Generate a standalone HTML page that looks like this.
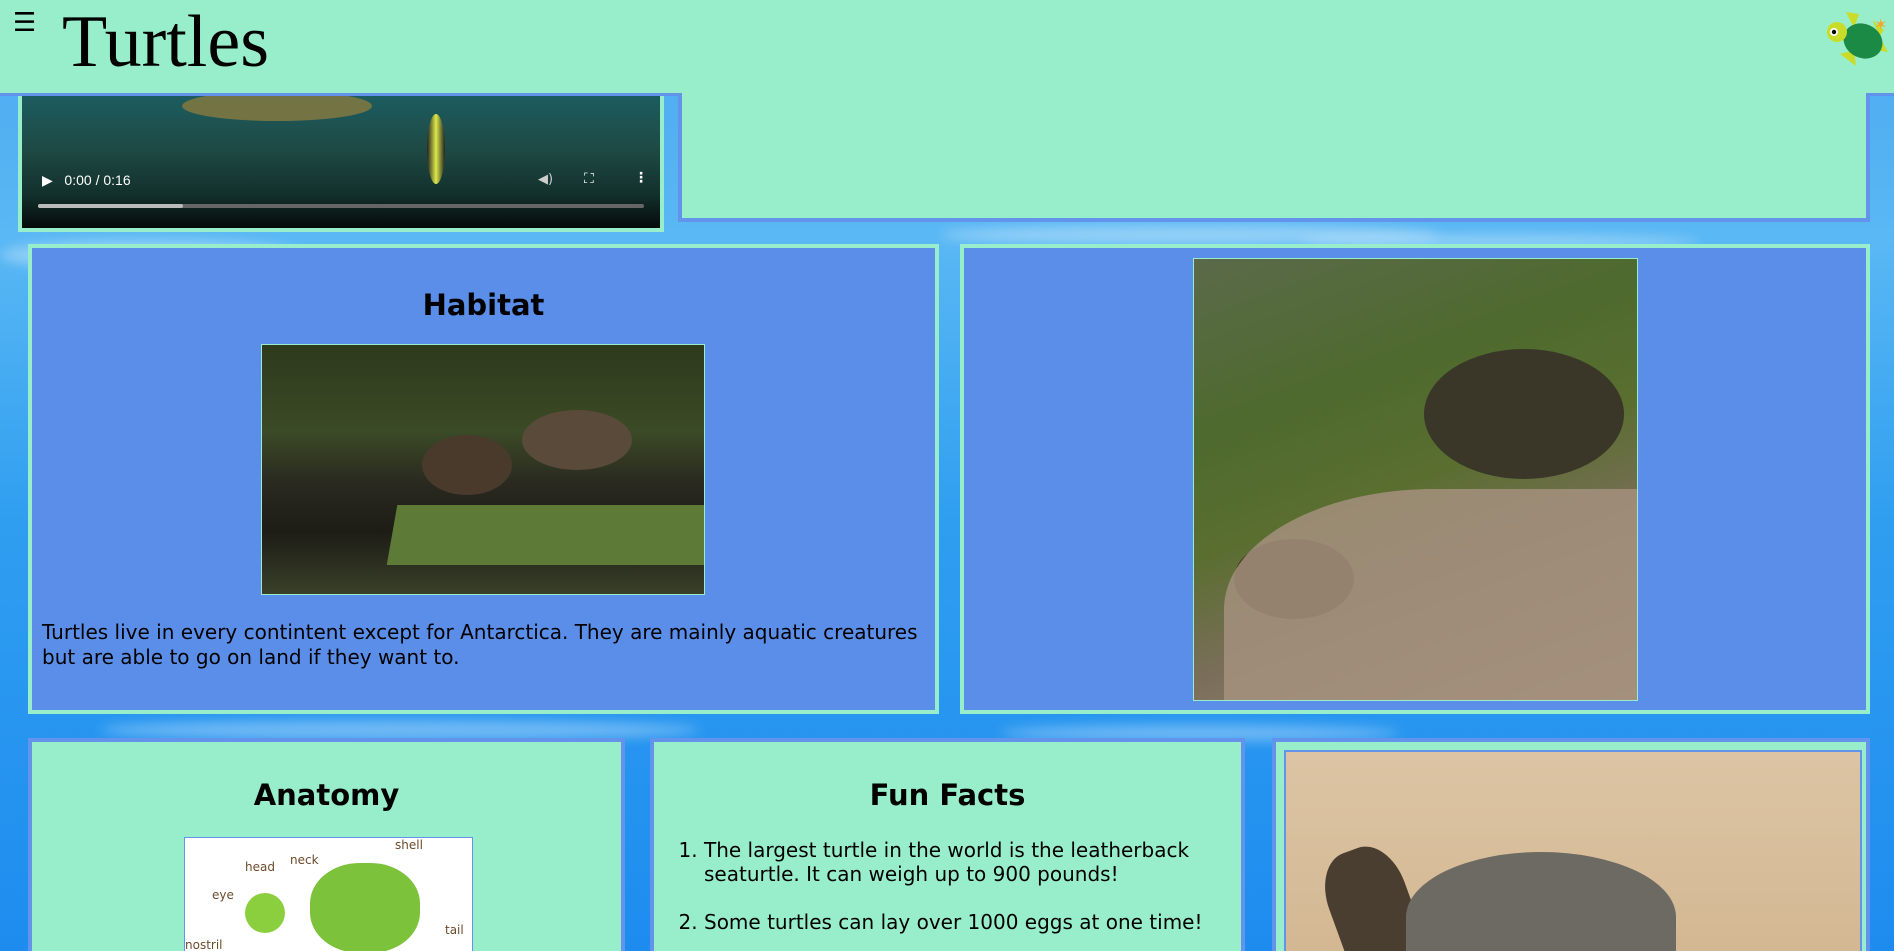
<!DOCTYPE html>
<html><head><meta charset="utf-8"><style>
*{margin:0;padding:0;box-sizing:border-box}
html,body{width:1894px;height:951px;overflow:hidden}
body{position:relative;font-family:"DejaVu Sans","Liberation Sans",sans-serif;
background:linear-gradient(180deg,#4aa8f0 0%,#5ab8f4 25%,#2f9ef0 55%,#1e8cef 100%);}
.streak{position:absolute;background:rgba(255,255,255,.35);border-radius:50%;filter:blur(6px)}
.abs{position:absolute}
header{position:absolute;left:0;top:0;width:1894px;height:96px;background:#98eecb;border-bottom:3px solid #6493eb}
.menu{position:absolute;left:13px;top:8px;font-size:26px;color:#000}
.title{position:absolute;left:62px;top:0px;font-family:"Liberation Serif",serif;font-size:74px;color:#000;letter-spacing:0px}
.box{position:absolute;overflow:hidden}
.mint{background:#98eecb;border:4px solid #6493eb}
.blue{background:#5b8ee9;border:4px solid #98eecb}
h2{font-size:29px;font-weight:bold;text-align:center;color:#000;position:absolute;width:100%;left:0}
p,li{font-size:20px;line-height:25px;color:#000}
</style></head><body>
<div class="streak" style="left:0;top:240px;width:300px;height:30px"></div>
<div class="streak" style="left:940px;top:225px;width:500px;height:20px"></div>
<div class="streak" style="left:1300px;top:235px;width:400px;height:14px"></div>
<div class="streak" style="left:100px;top:720px;width:600px;height:20px"></div>
<div class="streak" style="left:1000px;top:725px;width:400px;height:16px"></div>

<header>
<div class="menu">☰</div>
<div class="title">Turtles</div>
<svg class="abs" style="left:1826px;top:8px" width="66" height="62" viewBox="0 0 66 62">
<path d="M20 4 L33 6 L28 20Z" fill="#c9dc2a"/>
<path d="M14 46 L30 58 L28 42Z" fill="#c9dc2a"/>
<path d="M52 26 L62 44 L48 42Z" fill="#c9dc2a"/>
<path d="M46 12 L58 22 L54 28Z" fill="#c9dc2a"/>
<ellipse cx="37" cy="33" rx="20" ry="17" fill="#1a8a44" transform="rotate(25 37 33)"/>
<ellipse cx="11" cy="24" rx="10" ry="10" fill="#c9dc2a"/>
<circle cx="8" cy="24" r="4" fill="#fff"/><circle cx="8" cy="24" r="2.2" fill="#000"/>
<text x="48" y="22" font-size="16" fill="#f5a623">✶</text>
</svg>
</header>

<div class="box" style="left:18px;top:96px;width:646px;height:136px;border:4px solid #98eecb;border-top:none;background:linear-gradient(180deg,#1c5c60 0%,#1f4a44 40%,#12302c 75%,#050a0a 100%)">
 <div class="abs" style="left:160px;top:-5px;width:190px;height:30px;border-radius:50%;background:#8a7a3e;opacity:.8"></div>
 <div class="abs" style="left:405px;top:18px;width:18px;height:70px;border-radius:50%;background:linear-gradient(90deg,#222,#dde84a,#222)"></div>
 <div class="abs" style="left:20px;top:76px;color:#fff;font-family:'Liberation Sans',sans-serif;font-size:14px">▶&nbsp;&nbsp;&nbsp;0:00 / 0:16</div>
 <div class="abs" style="left:516px;top:76px;color:#ccc;font-size:13px">◀)</div>
 <div class="abs" style="left:562px;top:75px;color:#fff;font-size:14px">⛶</div>
 <div class="abs" style="left:612px;top:74px;color:#fff;font-size:14px;font-weight:bold">⋮</div>
 <div class="abs" style="left:16px;top:108px;width:606px;height:4px;background:#666;border-radius:2px"></div>
 <div class="abs" style="left:16px;top:108px;width:145px;height:4px;background:#bbb;border-radius:2px"></div>
</div>

<div class="box mint" style="left:678px;top:93px;width:1192px;height:129px;border-top:none"></div>

<div class="box blue" style="left:28px;top:244px;width:911px;height:470px">
 <h2 style="top:40px">Habitat</h2>
 <div class="abs" style="left:229px;top:96px;width:444px;height:251px;border:1px solid #98eecb;overflow:hidden;background:linear-gradient(180deg,#2e3a1c 0%,#3b4a26 35%,#2a2a20 55%,#1d1c16 75%,#3a4028 100%)">
  <div class="abs" style="left:160px;top:90px;width:90px;height:60px;border-radius:50%;background:#4a3a2c"></div>
  <div class="abs" style="left:260px;top:65px;width:110px;height:60px;border-radius:50%;background:#5a4a3a"></div>
  <div class="abs" style="left:130px;top:160px;width:320px;height:60px;background:#5d7a36;transform:skewX(-10deg)"></div>
 </div>
 <p class="abs" style="left:10px;top:372px;width:890px">Turtles live in every contintent except for Antarctica. They are mainly aquatic creatures but are able to go on land if they want to.</p>
</div>

<div class="box blue" style="left:960px;top:244px;width:910px;height:470px">
 <div class="abs" style="left:229px;top:10px;width:445px;height:443px;border:1px solid #98eecb;overflow:hidden;background:linear-gradient(160deg,#5b6a4a 0%,#4e6a2e 30%,#5a6e30 50%,#7a6e5a 70%,#a08c78 100%)">
  <div class="abs" style="left:230px;top:90px;width:200px;height:130px;border-radius:50%;background:#3a3628"></div>
  <div class="abs" style="left:40px;top:280px;width:120px;height:80px;border-radius:50%;background:#3a3020"></div>
  <div class="abs" style="left:30px;top:230px;width:420px;height:240px;border-radius:50% 0 0 0;background:#a4907e;opacity:.85"></div>
 </div>
</div>

<div class="box mint" style="left:28px;top:738px;width:597px;height:230px">
 <h2 style="top:36px">Anatomy</h2>
 <div class="abs" style="left:152px;top:95px;width:289px;height:140px;background:#fff;border:1px solid #6493eb">
  <div class="abs" style="left:125px;top:25px;width:110px;height:90px;border-radius:45%;background:#7cc23a"></div>
  <div class="abs" style="left:60px;top:55px;width:40px;height:40px;border-radius:50%;background:#8bcf3f"></div>
  <div class="abs" style="left:60px;top:22px;font-size:12px;color:#6b4a2a">head</div>
  <div class="abs" style="left:105px;top:15px;font-size:12px;color:#6b4a2a">neck</div>
  <div class="abs" style="left:210px;top:0;font-size:12px;color:#6b4a2a">shell</div>
  <div class="abs" style="left:27px;top:50px;font-size:12px;color:#6b4a2a">eye</div>
  <div class="abs" style="left:0;top:100px;font-size:12px;color:#6b4a2a">nostril</div>
  <div class="abs" style="left:260px;top:85px;font-size:12px;color:#6b4a2a">tail</div>
 </div>
</div>

<div class="box mint" style="left:650px;top:738px;width:595px;height:230px">
 <h2 style="top:36px">Fun Facts</h2>
 <ol class="abs" style="left:50px;top:96px;width:520px;padding-left:0">
  <li style="margin-bottom:24px;line-height:24px">The largest turtle in the world is the leatherback seaturtle. It can weigh up to 900 pounds!</li>
  <li>Some turtles can lay over 1000 eggs at one time!</li>
 </ol>
</div>

<div class="box" style="left:1272px;top:738px;width:598px;height:230px;background:#98eecb;border:4px solid #6493eb">
 <div class="abs" style="left:8px;top:8px;width:578px;height:230px;border:2px solid #6493eb;overflow:hidden;background:linear-gradient(180deg,#dcc4a4,#d2b690)">
  <div class="abs" style="left:45px;top:95px;width:80px;height:120px;border-radius:40% 40% 0 0;background:#4a3e30;transform:rotate(-20deg)"></div>
  <div class="abs" style="left:120px;top:100px;width:270px;height:130px;border-radius:50% 50% 0 0;background:#6d6a64"></div>
 </div>
</div>
</body></html>
